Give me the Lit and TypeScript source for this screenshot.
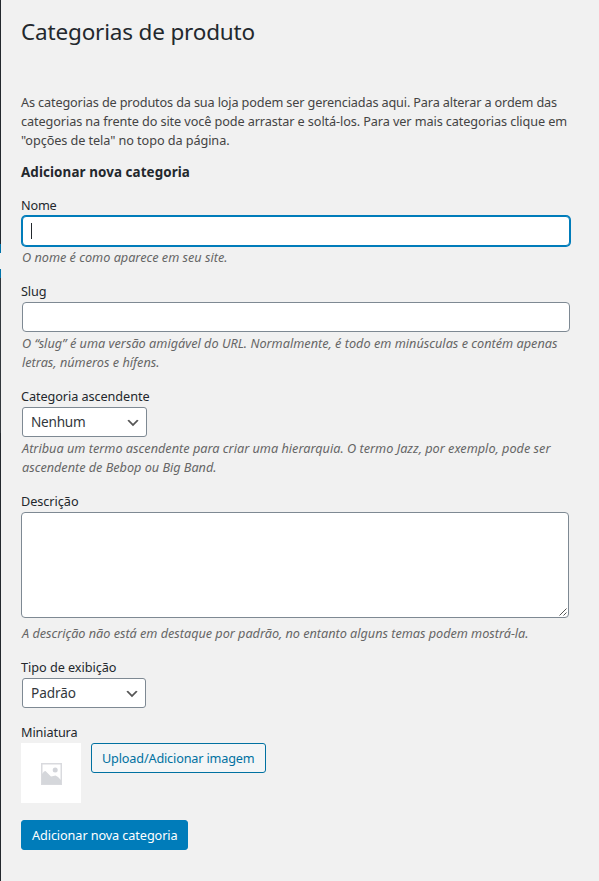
import { LitElement, html, css, svg } from "lit";
import { customElement, property } from "lit/decorators.js";

/** One line of text whose tracking is set so that it fills a given measure. */
@customElement("fit-line")
class FitLine extends LitElement {
  @property({ type: Number }) measure = 0;

  static styles = css`
    :host { display: block; white-space: nowrap; }
    .text { display: inline-block; }
  `;

  firstUpdated() {
    const el = this.renderRoot.querySelector(".text") as HTMLElement;
    const count = (this.textContent || "").trim().length;
    const natural = el.getBoundingClientRect().width;
    if (count && this.measure) {
      el.style.letterSpacing = `${(this.measure - natural) / count}px`;
    }
  }

  render() {
    return html`<span class="text"><slot></slot></span>`;
  }
}

type Line = [string, number];

const chevron = svg`<svg class="chevron" width="16" height="16" viewBox="0 0 20 20">
  <path d="M5 6l5 5 5-5 2 1-7 7-7-7 2-1z" fill="#555"/></svg>`;

@customElement("app-root")
class AppRoot extends LitElement {
  static styles = css`
    :host {
      display: flex;
      box-sizing: border-box;
      width: 599px;
      height: 881px;
      overflow: hidden;
      background: #f1f1f1;
      font: 12.7px/19px "Noto Sans", "Open Sans", sans-serif;
      color: #23282d;
    }
    .edge {
      flex: none;
      width: 1px;
      background: linear-gradient(#23282d 244px, #0073aa 244px 253px, #f1f1f1 253px 269px,
        #0073aa 269px 278px, #32373c 278px 433px, #23282d 433px);
    }
    .page { width: 550px; padding: 17px 0 0 20px; }
    h1 { margin: 0; font-size: 22.5px; font-weight: 400; line-height: 30px; }
    .intro { margin-top: 46px; color: #444; }
    h2 { margin: 13px 0 14px; font-size: 13.4px; font-weight: 700; line-height: 19px; }
    form { display: flex; flex-direction: column; gap: 15px; }
    .box {
      box-sizing: border-box;
      margin: 1px 0 0 1px;
      width: 548px;
      height: 30px;
      border: 1px solid #7e8993;
      border-radius: 4px;
      background: #fff;
    }
    .focus {
      display: flex;
      align-items: center;
      padding-left: 8px;
      border-color: #007cba;
      box-shadow: 0 0 0 1px #007cba;
    }
    .caret { width: 1px; height: 16px; background: #23282d; }
    .area { position: relative; margin-left: 0; height: 106px; }
    .grip { position: absolute; right: 1px; bottom: 1px; }
    .select {
      display: flex;
      align-items: center;
      justify-content: space-between;
      width: 125px;
      padding: 0 5px 2px 8px;
      border-radius: 3px;
      font-size: 13.6px;
      color: #32373c;
    }
    .narrow { width: 124px; }
    .chevron { display: block; margin-top: 3px; }
    .help { margin: 2px 0 0 1px; font-style: italic; color: #666; }
    .area + .help { margin-top: 6px; }
    .media { display: flex; align-items: flex-start; gap: 10px; margin-top: 1px; }
    .thumb {
      display: grid;
      place-items: center;
      box-sizing: border-box;
      width: 60px;
      height: 60px;
      padding: 2px 0 0 1px;
      background: #fff;
    }
    .button {
      box-sizing: border-box;
      height: 30px;
      padding: 5px 10px 0;
      border: 1px solid #0071a1;
      border-radius: 3px;
      background: #f3f5f6;
      color: #0071a1;
      width: 175px;
    }
    .primary {
      width: 167px;
      margin-top: 2px;
      border-color: #007cba;
      background: #007cba;
      color: #fff;
    }
  `;

  private lines(lines: Line[]) {
    return lines.map(([t, w]) => html`<fit-line .measure=${w}>${t}</fit-line>`);
  }

  private field(label: Line, control: unknown, help: Line[] = []) {
    return html`<div class="field">
      ${this.lines([label])}${control}
      ${help.length ? html`<div class="help">${this.lines(help)}</div>` : ""}
    </div>`;
  }

  render() {
    return html`
      <div class="edge"></div>
      <main class="page">
        <h1>${this.lines([["Categorias de produto", 234]])}</h1>
        <div class="intro">${this.lines([
          ["As categorias de produtos da sua loja podem ser gerenciadas aqui. Para alterar a ordem das", 536],
          ["categorias na frente do site você pode arrastar e soltá-los. Para ver mais categorias clique em", 546],
          ["\"opções de tela\" no topo da página.", 208.5],
        ])}</div>
        <h2>${this.lines([["Adicionar nova categoria", 169]])}</h2>
        <form>
          ${this.field(["Nome", 35.5],
            html`<div class="box focus"><span class="caret"></span></div>`,
            [["O nome é como aparece em seu site.", 205.5]])}
          ${this.field(["Slug", 25.5], html`<div class="box"></div>`, [
            ["O “slug” é uma versão amigável do URL. Normalmente, é todo em minúsculas e contém apenas", 535.5],
            ["letras, números e hífens.", 137.5],
          ])}
          ${this.field(["Categoria ascendente", 128.5],
            html`<div class="box select">${this.lines([["Nenhum", 54.5]])}${chevron}</div>`, [
            ["Atribua um termo ascendente para criar uma hierarquia. O termo Jazz, por exemplo, pode ser", 528.5],
            ["ascendente de Bebop ou Big Band.", 194.5],
          ])}
          ${this.field(["Descrição", 57.5],
            html`<div class="box area"><svg class="grip" width="8" height="8" viewBox="0 0 8 8">
              <path d="M.5 7.5l7-7M4.5 7.5l3-3" stroke="#555" fill="none"/></svg></div>`,
            [["A descrição não está em destaque por padrão, no entanto alguns temas podem mostrá-la.", 506.5]])}
          ${this.field(["Tipo de exibição", 95.5],
            html`<div class="box select narrow">${this.lines([["Padrão", 45]])}${chevron}</div>`)}
          ${this.field(["Miniatura", 56.5], html`<div class="media">
            <div class="thumb"><svg width="21" height="22" viewBox="0 0 21 22">
              <rect x=".75" y=".75" width="19.5" height="20.5" fill="#fff" stroke="#d9dade" stroke-width="1.5"/>
              <path d="M1 11l2-2.5 1.5-.5 5.5 5.5 2.5-.5 2-.5 2.5 1.5 3 3V21H1z" fill="#d5d7db"/>
              <circle cx="14.2" cy="7" r="2.5" fill="#d2d4d9"/></svg></div>
            <div class="button">${this.lines([["Upload/Adicionar imagem", 152.5]])}</div>
          </div>`)}
          <div class="button primary">${this.lines([["Adicionar nova categoria", 145.5]])}</div>
        </form>
      </main>`;
  }
}
